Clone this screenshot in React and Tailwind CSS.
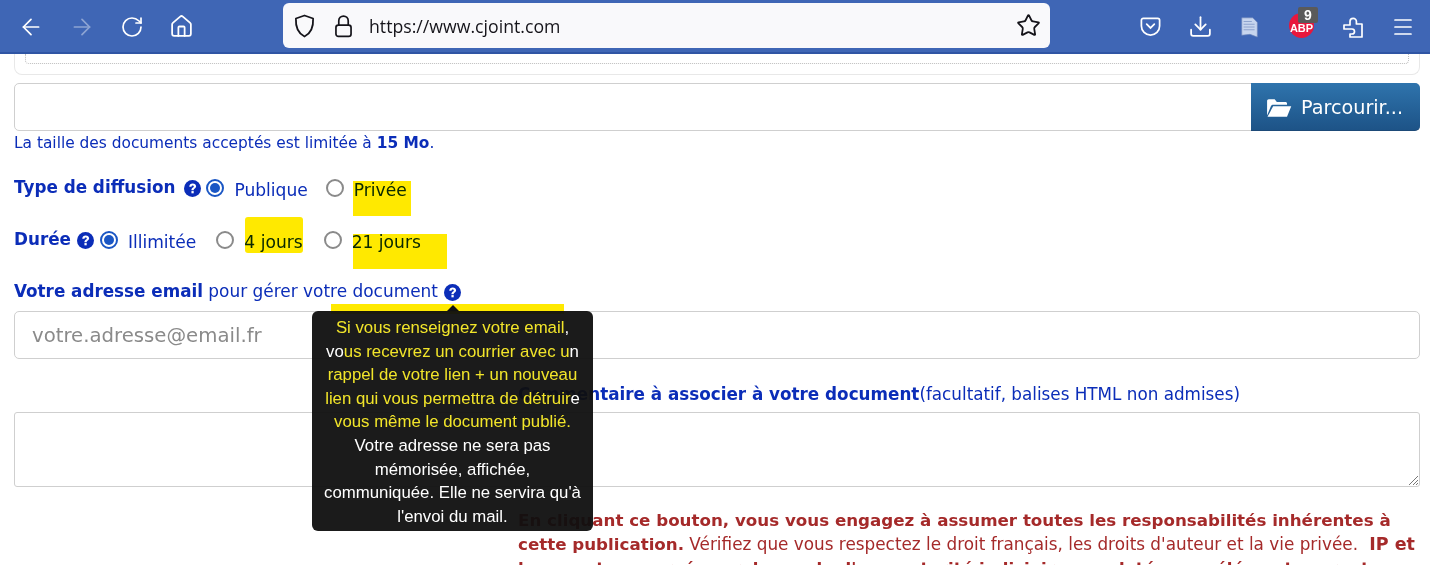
import { ArrowLeft, ArrowRight, RotateCw, Home, Star, Download, Menu } from 'lucide-react'

const Help = () => (
  <svg viewBox="0 0 24 24" className="inline-block w-[17px] h-[17px]">
    <circle cx="12" cy="12" r="12" fill="#0b2db8" />
    <path d="M7.4 9.4C7.6 6.6 9.6 5 12.3 5c2.8 0 4.8 1.6 4.8 3.9 0 3.2-3.4 3.100-3.400 5.500h-3.200c0-3.800 3.300-3.500 3.300-5.300 0-.8-.6-1.300-1.500-1.300-1 0-1.600.7-1.700 1.600z" fill="#fff" />
    <rect x="10.500" y="15.600" width="3.200" height="3.200" fill="#fff" />
  </svg>
)

const Radio = ({ checked }) => (
  <span className={`inline-flex items-center justify-center w-[18px] h-[18px] rounded-full bg-white border-2 ${checked ? 'border-[#1a56c4]' : 'border-[#8a8a8a]'}`}>
    {checked && <span className="w-[10px] h-[10px] rounded-full bg-[#1a56c4]" />}
  </span>
)

const Option = ({ checked, label, className }) => (
  <span className={`inline-flex items-center ${className}`}>
    <Radio checked={checked} />
    <span className="ml-[10px] relative top-[3px] text-[17.100px]">{label}</span>
  </span>
)

const Toolbar = () => (
  <div className="h-[54px] bg-[#3f66b5] border-b-2 border-[#2f55a4] flex items-center text-white">
    <div className="flex items-center w-[283px] pl-[18px] pt-[1px] gap-[25px]">
      <ArrowLeft size={26} strokeWidth={1.6} />
      <ArrowRight size={26} strokeWidth={1.6} className="opacity-40" />
      <RotateCw size={24} strokeWidth={1.7} />
      <Home size={25} strokeWidth={1.7} />
    </div>
    <div className="w-[767px] h-[45px] mt-[-1px] bg-[#f9f9fb] rounded-[6px] flex items-center pl-[11px] pr-[9px] text-[#15141a]">
      <svg viewBox="0 0 20 24" className="w-[21px] h-[24px]" fill="none" stroke="currentColor" strokeWidth="1.8" strokeLinejoin="round">
        <path d="M10 1.500L18.600 4.500C19 12 17 19 10 22.500 3 19 1 12 1.400 4.500z" />
      </svg>
      <svg viewBox="0 0 18 24" className="w-[17px] h-[24px] ml-[20px]" fill="none" stroke="currentColor" strokeWidth="1.8">
        <path d="M4 11V6.500a5 5 0 0 1 10 0V11" />
        <rect x="1" y="11" width="16" height="12" rx="2.500" />
      </svg>
      <span className="ml-[17px] pt-[1px] text-[17.700px] font-['Open_Sans',sans-serif]">https://www.cjoint.com</span>
      <Star size={25} strokeWidth={1.7} className="ml-auto" />
    </div>
    <div className="flex-1 flex items-center pl-[89px] pt-[1px]">
      <svg viewBox="0 0 24 24" className="w-[23px] h-[23px]" fill="none" stroke="currentColor" strokeWidth="1.8">
        <path d="M4.500 3.500h15a2 2 0 0 1 2 2v6a9.500 9.500 0 0 1-19 0v-6a2 2 0 0 1 2-2z" />
        <path d="M8 9.500l4 4 4-4" strokeLinecap="round" />
      </svg>
      <Download size={25} strokeWidth={1.7} className="ml-[26px]" />
      <svg viewBox="0 0 24 24" className="w-[22px] h-[24px] ml-[26px]" fill="#c7d5ee" stroke="#6d87bb" strokeWidth="0.7">
        <path d="M3 2h12l5 5v16l-8-3-9 1z" />
        <path d="M5 6h9M5 9h12M5 12h12M5 15h12" />
      </svg>
      <span className="relative ml-[28px] w-[25px] h-[25px] rounded-full bg-[#e8173d] flex items-end justify-center pb-[4px] text-[11px] leading-none font-bold font-['Liberation_Sans',sans-serif] mt-[-2px]">
        ABP
        <span className="absolute top-[-6px] left-[9px] w-[20px] h-[16px] rounded-[2px] bg-[#5a5a5a] text-[14px] leading-[16px] text-center">9</span>
      </span>
      <svg viewBox="0 0 24 24" className="w-[24px] h-[26px] ml-[27px]" fill="none" stroke="currentColor" strokeWidth="1.700" strokeLinejoin="round">
        <path d="M3 10h6V6.500a3.200 3.200 0 0 1 6.400 0V9H21v13H9v-3h2a2.500 2.500 0 0 0 0-5H3z" />
      </svg>
      <Menu size={24} strokeWidth={1.7} className="ml-[26px]" />
    </div>
  </div>
)

const Tooltip = () => (
  <div className="absolute left-[312px] top-[311px] w-[281px] h-[220px] rounded-[6px] bg-[#0f0f0f]/95 text-white text-center text-[16.800px] leading-[23.600px] font-['Liberation_Sans',sans-serif] whitespace-nowrap pt-[5px]">
    <span className="absolute left-[135px] top-[-6px] w-0 h-0 border-x-[6px] border-x-transparent border-b-[6px] border-b-[#111111]" />
    <span className="text-[#f2e52a]">Si vous renseignez votre email</span>,<br />
    vo<span className="text-[#f2e52a]">us recevrez un courrier avec u</span>n<br />
    <span className="text-[#f2e52a]">rappel de votre lien + un nouveau</span><br />
    <span className="text-[#f2e52a]">lien qui vous permettra de détruir</span>e<br />
    <span className="text-[#f2e52a]">vous même le document publié.</span><br />
    Votre adresse ne sera pas<br />
    mémorisée, affichée,<br />
    communiquée. Elle ne servira qu'à<br />
    l'envoi du mail.
  </div>
)

export default function App() {
  return (
    <div className="relative w-[1430px] h-[565px] overflow-hidden bg-white font-['DejaVu_Sans',sans-serif] text-[16.800px] text-[#0b2db8]">
      <Toolbar />
      <div className="pl-[14px] pr-[10px] h-[511px] overflow-hidden">
        <div className="h-[21px] border border-t-0 border-[#e8e8e8] rounded-b-[8px] px-[10px]">
          <div className="h-[10px] border border-t-0 border-dotted border-[#bdbdbd] rounded-b-[4px]" />
        </div>
        <div className="mt-[8px] h-[48px] flex border border-[#cfcfcf] rounded-[5px]">
          <div className="flex-1" />
          <div className="w-[169px] -my-px -mr-px rounded-r-[5px] bg-gradient-to-b from-[#2f74ad] to-[#1d5387] border-b border-[#1d4a78] text-white text-[19.200px] flex items-center pl-[15px] pt-[3px] gap-[9px]">
            <svg viewBox="0 0 24 20" className="w-[26px] h-[22px]" fill="currentColor">
              <path d="M1 17V3.500C1 2.700 1.700 2 2.500 2H8l2 2.500h8c.8 0 1.400.6 1.400 1.400V7H6.500c-.9 0-1.600.5-2 1.300z" />
              <path d="M6.600 8.400H23.300L19.400 18H1.400z" />
            </svg>
            Parcourir...
          </div>
        </div>
        <p className="mt-[1px] text-[15.400px] leading-[22px]">
          La taille des documents acceptés est limitée à <b>15 Mo</b>.
        </p>
        <div className="mt-[22px] h-[24px] flex items-center">
          <b>Type de diffusion</b>
          <span className="ml-[9px] flex"><Help /></span>
          <Option checked label="Publique" className="ml-[5px]" />
          <Option label="Privée" className="ml-[18px]" />
        </div>
        <div className="mt-[28px] h-[24px] flex items-center">
          <b>Durée</b>
          <span className="ml-[6px] flex"><Help /></span>
          <Option checked label="Illimitée" className="ml-[6px]" />
          <Option label="4 jours" className="ml-[20px]" />
          <Option label="21 jours" className="ml-[21px]" />
        </div>
        <div className="mt-[28px] h-[24px] flex items-center">
          <p><b>Votre adresse email</b> <span className="text-[16.950px]">pour gérer votre document</span></p>
          <span className="ml-[6px] flex"><Help /></span>
        </div>
        <input
          readOnly
          placeholder="votre.adresse@email.fr"
          className="mt-[7px] block w-full h-[48px] border border-[#cfcfcf] rounded-[5px] px-[17px] text-[19.700px] placeholder:text-[#8a8a8a] outline-none"
        />
        <div className="mt-[23px] pl-[504px] h-[24px] leading-[24px] whitespace-nowrap">
          <b>Commentaire à associer à votre document</b>(facultatif, balises HTML non admises)
        </div>
        <div className="mt-[6px] relative h-[75px] border border-[#cfcfcf] rounded-[3px]">
          <svg viewBox="0 0 10 10" className="absolute right-[1px] bottom-[1px] w-[10px] h-[10px]" stroke="#777" strokeWidth="1">
            <path d="M1 10L10 1M5 10l5-5M8 10l2-2" />
          </svg>
        </div>
        <div className="mt-[21px] pl-[504px] text-[16.700px] leading-[24px] text-[#a52a2a]">
          <b>En cliquant ce bouton, vous vous engagez à assumer toutes les responsabilités inhérentes à cette publication.</b> <span className="text-[16.850px]">Vérifiez que vous respectez le droit français, les droits d'auteur et la vie privée.</span> <b className="text-[17.500px] ml-[6px]">IP et</b> <b>logs sont conservés sur demande d'une autorité judiciaire mandatée, ces éléments seront</b>
        </div>
      </div>

      {/* marker strokes drawn over the page */}
      <div className="absolute left-[353px] top-[181px] w-[58px] h-[35px] bg-[#ffe900] mix-blend-multiply" />
      <div className="absolute left-[245px] top-[217px] w-[58px] h-[36px] rounded-[3px] bg-[#ffe900] mix-blend-multiply" />
      <div className="absolute left-[353px] top-[234px] w-[94px] h-[35px] bg-[#ffe900] mix-blend-multiply" />
      <div className="absolute left-[331px] top-[304px] w-[233px] h-[10px] bg-[#ffe900] mix-blend-multiply" />

      <Tooltip />
    </div>
  )
}
